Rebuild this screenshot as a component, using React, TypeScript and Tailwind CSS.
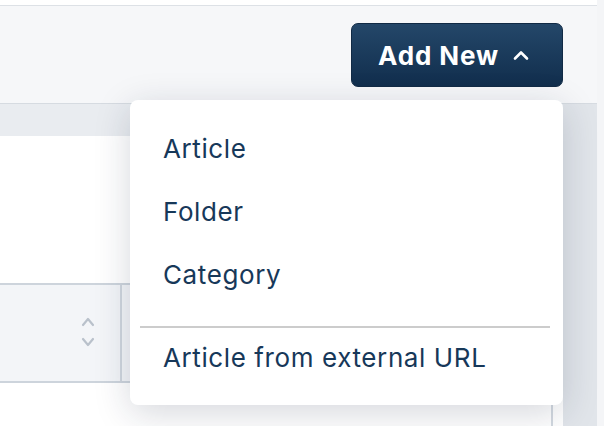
function SortIcon() {
  return (
    <svg width="14" height="32" viewBox="0 0 14 32" fill="none" stroke="#b9c1cb" strokeWidth="2.2" strokeLinecap="round" strokeLinejoin="round">
      <polyline points="2,8 7,2 12,8" />
      <polyline points="2,22 7,28 12,22" />
    </svg>
  );
}

const items = ["Article", "Folder", "Category"];

export default function App() {
  return (
    <div className="relative flex h-[426px] w-[604px] overflow-hidden bg-white font-['Inter','Noto_Sans',sans-serif]">
      <div className="flex w-[597px] flex-col">
        <div className="h-[6px] border-b border-[#dde1e6] bg-white" />
        <div className="flex h-[97px] items-start justify-end bg-[#f6f7f9] pr-[34px] pt-[17px]">
          <button
            type="button"
            className="flex h-[64px] w-[212px] items-center rounded-[7px] border border-[#112a45] bg-gradient-to-b from-[#244769] to-[#112e4d] pl-[26px] text-[26px] font-bold tracking-[0.9px] text-white"
          >
            Add New
            <svg className="ml-[14px]" width="16" height="11" viewBox="0 0 16 11" fill="none" stroke="white" strokeWidth="2.6" strokeLinecap="round" strokeLinejoin="round">
              <polyline points="2,8.5 8,2.5 14,8.5" />
            </svg>
          </button>
        </div>
        <div className="flex flex-1 border-t border-[#d6dbe1]">
          <div className="flex flex-1 flex-col">
            <div className="h-[32px] bg-[#e9ecf0]" />
            <div className="h-[147px] bg-white" />
            <div className="flex h-[100px] border-y-2 border-[#cdd4dc] bg-[#f3f5f8]">
              <div className="flex w-[120px] items-center justify-end pr-[25px]">
                <SortIcon />
              </div>
              <div className="w-[2px] bg-[#cfd6de]" />
              <div className="flex-1" />
            </div>
            <div className="flex flex-1 bg-white">
              <div className="flex-1" />
              <div className="mr-[10px] w-[2px] bg-[#d3d9e0]" />
            </div>
          </div>
          <div className="w-[34px] bg-[#e1e5ea]" />
        </div>
      </div>
      <div className="w-[7px] bg-[#f4f5f7]" />

      <div className="absolute left-[130px] top-[100px] w-[433px] rounded-[8px] bg-white pb-[19px] pt-[17px] text-[26px] tracking-[0.6px] text-[#173859] shadow-[0_8px_36px_rgba(20,35,60,0.18)]">
        {items.map((label) => (
          <div key={label} className="h-[63px] pl-[33px] leading-[63px]">
            {label}
          </div>
        ))}
        <div className="mb-[2px] ml-[10px] mr-[13px] mt-[20px] h-[2px] bg-[#cccccc]" />
        <div className="h-[56px] pl-[33px] leading-[56px]">Article from external URL</div>
      </div>
    </div>
  );
}
